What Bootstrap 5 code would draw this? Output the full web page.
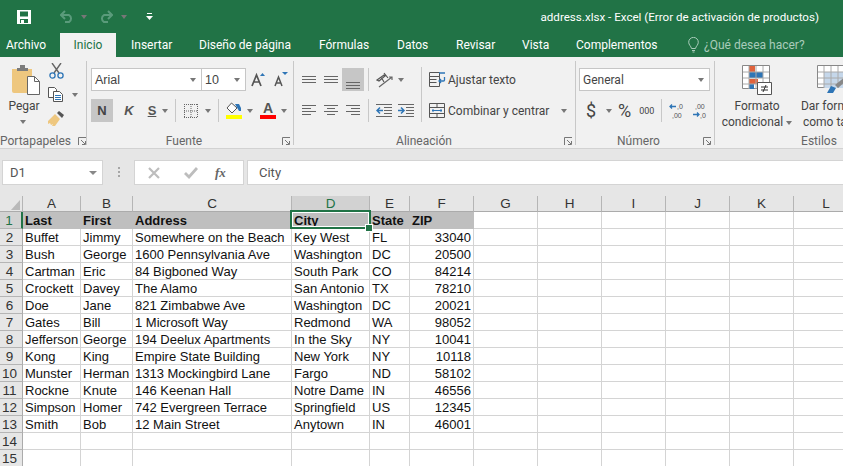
<!doctype html>
<html lang="es">
<head>
<meta charset="utf-8">
<title>address.xlsx - Excel</title>
<link href="https://cdn.jsdelivr.net/npm/bootstrap@5.3.0/dist/css/bootstrap.min.css" rel="stylesheet">
<style>
html,body{width:843px;height:466px;overflow:hidden;background:#e6e6e6}
body{font-family:Roboto,"Noto Sans",sans-serif;font-size:12px;color:#444;line-height:16px}
svg{display:block;flex:none}
.l1{margin-left:1px}.l2{margin-left:2px}.l3{margin-left:3px}.l4{margin-left:4px}.l5{margin-left:5px}.l6{margin-left:6px}.l7{margin-left:7px}.l8{margin-left:8px}.l9{margin-left:9px}.l10{margin-left:10px}.l11{margin-left:11px}.l12{margin-left:12px}.l14{margin-left:14px}.l19{margin-left:19px}.l23{margin-left:23px}.l29{margin-left:29px}
.dim{border-top-color:#5a9b7b}
.titlebar{height:33px;background:#217346;color:#fff;padding-left:17px}
.doc-title{margin-left:auto;margin-right:24px;font-size:11.6px}
.tabrow{height:24px;background:#217346;color:#fff;display:grid;grid-template-columns:54px 56px 83px 120px 78px 59px 66px 54px 112px 16px 1fr;padding-left:6px;align-items:center}
.tabrow>div{white-space:nowrap}
.tab-on{background:#f1f1f1;color:#217346;height:24px;line-height:25px;text-align:center}
.tab-ins{padding-left:15px}
.tell{color:#a9ccba}
.ribbon{height:92px;background:#f1f1f1;border-bottom:1px solid #d2d2d2;padding-top:4px;overflow:hidden;display:flex}
.rgroup{height:84px;border-right:1px solid #c8c8c8;display:flex;flex-direction:column;flex:none}
.g1{width:87px}.g2{width:207px;padding-left:4px}.g3{width:282px}.g4{width:139px;padding-left:3px}.g5{width:208px;border:0}
.rbody{flex:1;min-height:0}
.rowa{margin-top:7px;height:23px;display:flex;align-items:center}
.rowb{margin-top:8px;height:23px;display:flex;align-items:center}
.rlabel{height:16px;margin-bottom:-4px;display:flex;align-items:center;color:#666}
.rlabel span{flex:1;text-align:center}
.lab-a span{padding-right:7px}
.lab-c span{padding-right:10px}
.lab-d span{padding-right:5px}
.launch{margin-right:3px}
.tri{width:0;height:0;border-left:3.5px solid transparent;border-right:3.5px solid transparent;border-top:4px solid #777;flex:none}
.vsep{width:1px;height:23px;background:#c8c8c8;flex:none}
.vsep-tall{height:55px;margin-top:6px}
.combo{height:23px;background:#fff;border:1px solid #c6c6c6;display:flex;align-items:center;padding:0 5px 0 3px;flex:none;color:#444}
.c-font{width:111px}.c-size{width:44px;border-left:0}.c-num{width:131px}
.combo .tri{margin-left:auto}
.cfont{font-family:"Liberation Sans",sans-serif;font-size:12.5px}
.hot{background:#c6c6c6;height:23px;display:flex;align-items:center;justify-content:center;flex:none}
.hot-b{width:22px;padding-top:12px}
.btnb{width:22px;font:bold 13px "Liberation Sans",sans-serif;color:#444}
.ltr{font:bold 13px "Liberation Sans",sans-serif;color:#555;width:12px;text-align:center}
.ltr-i{font-style:italic}
.ltr-u{text-decoration:underline}
.swatch{width:16px}
.fillbar-y{height:4px;background:#ff0;margin-top:1px}
.fillbar-r{height:4px;background:#f00;margin-top:1px}
.bigA{font:bold 14px/12px "Liberation Sans",sans-serif;color:#555;text-align:center}
.cmdtext{white-space:nowrap}
.bigcol{flex:none;width:76px;text-align:center;white-space:nowrap}
.bigcol svg{margin:4px auto 0}
.bigcol svg.ic2{margin-left:22px}
.bigcol p{margin:3px 0 0;line-height:16px}
.bigcol p+p{margin-top:0}
.ptcol{width:48px}
.pt-ic{margin:4px 0 0 12px}
.pt-tx{margin-top:3px;text-align:center}
.pt-tri{margin:6px 0 0 20px}
.mt2x{margin-top:2px}.mt8x{margin-top:8px}
.al-left{width:127px}
.l-big{font-size:18px}
.dollar{width:9px}
.k000{font-size:9px}
.pad5{padding-left:4px}
.dec{font:7px "Liberation Sans",sans-serif;fill:#555}
.fbar{height:47px;padding:11px 0 0 2px;display:flex;background:#e6e6e6}
.fbox{height:25px;background:#fff;border:1px solid #d4d4d4;display:flex;align-items:center;flex:none;font-size:13px}
.namebox{width:101px;padding:0 5px 0 7px;color:#555}
.namebox .tri{margin-left:auto;border-left-width:4px;border-right-width:4px;border-top-color:#888}
.fxbox{width:110px;margin-left:14px;padding-left:12px}
.fxtxt{font:italic bold 13px "Liberation Serif",serif;color:#666;margin-left:17px}
.finput{margin-left:3px;flex:1;padding-left:11px;color:#555;border-right:0}
.grip{width:2px;margin-left:15px;margin-top:7px;height:11px;background:repeating-linear-gradient(#a6a6a6 0 2px,transparent 2px 4px)}
.sheetwrap{height:270px;overflow:hidden;background:#fff}
.sheet{table-layout:fixed;width:859px;border-collapse:separate;border-spacing:0;font-family:"Liberation Sans",sans-serif;font-size:13px;color:#111}
.w23{width:23px}.w58{width:58px}.w52{width:52px}.w159{width:159px}.w78{width:78px}.w40{width:40px}.w64{width:64px}.w65{width:65px}
.sheet th,.sheet td{height:17px;padding:2px 2px 0;line-height:14px;border-right:1px solid #d4d4d4;border-bottom:1px solid #d4d4d4;white-space:nowrap;overflow:hidden;font-weight:400}
.sheet thead th{height:16px;font-size:13.5px;background:#e6e6e6;border-right:1px solid #b5b5b5;border-bottom:1px solid #ababab;text-align:center;color:#333;padding:0}
.sheet thead th.col-on{background:#d2d2d2;color:#217346;border-bottom:1px solid #217346}
.sheet tbody th{font-size:13.5px;background:#e6e6e6;border-right:1px solid #ababab;border-bottom:1px solid #b5b5b5;text-align:center;color:#333;padding:2px 3px 0 0}
.sheet tbody th.row-on{background:#d2d2d2;color:#217346;border-right:2px solid #217346}
.hdrcell{background:#bfbfbf;font-weight:700!important;border-color:#bfbfbf!important;color:#111}
.sheet td.num{text-align:right}
.corner svg{margin:2px 0 0 11px}
.sheet td.cellsel{position:relative;overflow:visible}
.cellsel::after{content:"";position:absolute;inset:-2px -2px -1px -2px;border:2px solid #217346;box-shadow:inset 0 0 0 1px #fff;pointer-events:none}
.cellsel::before{content:"";position:absolute;right:-4px;bottom:-4px;width:6px;height:6px;background:#217346;border:1px solid #fff;box-sizing:content-box;z-index:2}
</style>
</head>
<body>
<div class="titlebar d-flex align-items-center">
  <svg width="14" height="14" viewBox="0 0 14 14"><path fill="#fff" fill-rule="evenodd" d="M0 0h14v14H0zM3 1.500v5h8v-5zM3 9v4h8V9z"/><rect x="4" y="10" width="3" height="3" fill="#fff"/></svg>
  <svg class="l29" width="14" height="13" viewBox="0 0 14 13" fill="none" stroke="#5a9b7b" stroke-width="2"><path d="M1 5h8a4 4 0 0 1 0 7H5M5 1 1 5l4 4"/></svg>
  <div class="tri l7 dim"></div>
  <svg class="l12" width="14" height="13" viewBox="0 0 14 13" fill="none" stroke="#5a9b7b" stroke-width="2"><path d="M13 5H5a4 4 0 0 0 0 7h4M9 1l4 4-4 4"/></svg>
  <div class="tri l8 dim"></div>
  <svg class="l19" width="7" height="7" viewBox="0 0 7 7" fill="#fff"><path d="M1 0h5v1H1zM0 3h7L3.500 7z"/></svg>
  <div class="doc-title">address.xlsx - Excel (Error de activación de productos)</div>
</div>
<div class="tabrow">
  <div>Archivo</div><div class="tab-on">Inicio</div><div class="tab-ins">Insertar</div><div>Diseño de página</div><div>Fórmulas</div><div>Datos</div><div>Revisar</div><div>Vista</div><div>Complementos</div>
  <svg width="11" height="16" viewBox="0 0 11 16" fill="none" stroke="#a9ccba"><path d="M3.500 11.500C3 9 .7 8 .7 5.200a4.800 4.800 0 0 1 9.600 0C10.300 8 8 9 7.500 11.500zM4 13.500h3M4.500 15h2"/></svg>
  <div class="tell">¿Qué desea hacer?</div>
</div>
<div class="ribbon">
  <div class="rgroup g1">
    <div class="rbody d-flex">
      <div class="ptcol">
        <svg class="pt-ic" width="28" height="30" viewBox="0 0 28 30"><path fill="#eec77f" d="M0 4h20v24H2a2 2 0 0 1-2-2z"/><path fill="#7c7c7c" d="M5 3h3V0h5v3h3v3H5z"/><path fill="#fff" stroke="#666" d="M15.500 11.500h7l5 5v13h-12z"/><path fill="none" stroke="#666" d="M22.500 11.500v5h5"/></svg>
        <div class="pt-tx">Pegar</div>
        <div class="tri pt-tri"></div>
      </div>
      <div>
        <svg class="l1 mt2x" width="15" height="16" viewBox="0 0 15 16" fill="none"><path stroke="#666" stroke-width="1.400" d="M3 0l7 10M12 0 5 10"/><circle cx="3.500" cy="12.500" r="2.600" stroke="#2e75b6" stroke-width="1.300"/><circle cx="11.500" cy="12.500" r="2.600" stroke="#2e75b6" stroke-width="1.300"/></svg>
        <div class="d-flex align-items-center mt8x">
          <svg width="16" height="15" viewBox="0 0 16 15" fill="#fff" stroke="#555"><path d="M.5.500h6l2 2v8h-8z"/><path d="M5.500 4.500h6l3 3v7h-9z"/><path stroke="#2e75b6" d="M7 8.500h6M7 10.500h6M7 12.500h6"/></svg>
          <div class="tri l8"></div>
        </div>
        <svg class="mt8x" width="17" height="16" viewBox="0 0 17 16"><path fill="#eec77f" d="M0 11l7-7 5 5-5 7H4l1-2-2 1-1-2-2 1z"/><path fill="#555" d="M9 3l2-2 5 4-2 3z"/></svg>
      </div>
    </div>
    <div class="rlabel lab-a"><span>Portapapeles</span><svg class="launch" width="8" height="8" viewBox="0 0 8 8" fill="none" stroke="#777"><path d="M.5 8V.5H8M3 3l4 4M4 7.500h3.500V4"/></svg></div>
  </div>
  <div class="rgroup g2">
    <div class="rbody">
      <div class="rowa">
        <div class="combo c-font"><span class="cfont">Arial</span><div class="tri"></div></div>
        <div class="combo c-size"><span class="cfont">10</span><div class="tri"></div></div>
        <svg class="l5" width="14" height="15" viewBox="0 0 14 15"><path fill="none" stroke="#555" stroke-width="1.700" d="M1 14 5.500 3 10 14M3 10h5"/><path fill="#2e75b6" d="M9 4l2.500-3L14 4z"/></svg>
        <svg class="l9" width="14" height="15" viewBox="0 0 14 15"><path fill="none" stroke="#555" stroke-width="1.500" d="M1 14l3.500-9L8 14M2.500 11h4"/><path fill="#2e75b6" d="M8 0h6l-3 3z"/></svg>
      </div>
      <div class="rowb">
        <div class="hot btnb">N</div>
        <div class="ltr ltr-i l10">K</div>
        <div class="ltr ltr-u l11">S</div>
        <div class="tri l4"></div>
        <div class="vsep l7"></div>
        <svg class="l8" width="14" height="14" viewBox="0 0 14 14" fill="none" stroke="#666" stroke-dasharray="1 1"><path d="M.5 0v14M7 0v14M13.500 0v14M0 .5h14M0 7h14M0 13.500h14"/></svg>
        <div class="tri l7"></div>
        <div class="vsep l7"></div>
        <div class="swatch l7">
          <svg width="16" height="12" viewBox="0 0 16 12"><path fill="#fff" stroke="#555" d="M5.500 1 1 6l5 5 5-5z"/><path fill="#2e75b6" d="M9 2h4l2 4v3h-2z"/></svg>
          <div class="fillbar-y"></div>
        </div>
        <div class="tri l5"></div>
        <div class="swatch l7">
          <div class="bigA">A</div>
          <div class="fillbar-r"></div>
        </div>
        <div class="tri l5"></div>
      </div>
    </div>
    <div class="rlabel lab-d"><span>Fuente</span><svg class="launch" width="8" height="8" viewBox="0 0 8 8" fill="none" stroke="#777"><path d="M.5 8V.5H8M3 3l4 4M4 7.500h3.500V4"/></svg></div>
  </div>
  <div class="rgroup g3">
    <div class="rbody d-flex">
      <div class="al-left">
        <div class="rowa">
          <svg class="l8" width="14" height="8" viewBox="0 0 14 8" stroke="#666"><path d="M0 .5h14M0 3.500h14M0 6.500h14"/></svg>
          <svg class="l8" width="14" height="8" viewBox="0 0 14 8" stroke="#666"><path d="M0 .5h14M0 3.500h14M0 6.500h14"/></svg>
          <div class="hot hot-b l4"><svg width="14" height="8" viewBox="0 0 14 8" stroke="#666"><path d="M0 .5h14M0 3.500h14M0 6.500h14"/></svg></div>
          <div class="vsep l4"></div>
          <svg class="l7" width="17" height="16" viewBox="0 0 17 16" fill="none" stroke="#555" stroke-width="1.200"><path d="M1 8l7-5 1 1-6 5zM5 5l3 5M8 1l4 5"/><path stroke="#666" d="M3 15 16 5M13 5h3v3"/></svg>
          <div class="tri l5"></div>
        </div>
        <div class="rowb">
          <svg class="l8" width="14" height="11" viewBox="0 0 14 11" stroke="#666"><path d="M0 .5h14M0 3.500h9M0 6.500h14M0 9.500h9"/></svg>
          <svg class="l8" width="14" height="11" viewBox="0 0 14 11" stroke="#666"><path d="M0 .5h14M3 3.500h8M0 6.500h14M3 9.500h8"/></svg>
          <svg class="l8" width="14" height="11" viewBox="0 0 14 11" stroke="#666"><path d="M0 .5h14M5 3.500h9M0 6.500h14M5 9.500h9"/></svg>
          <div class="vsep l8"></div>
          <svg class="l7" width="16" height="13" viewBox="0 0 16 13" fill="none" stroke="#666"><path d="M0 .5h16M8 3.500h8M8 6.500h8M8 9.500h8M0 12.500h16"/><path stroke="#2e75b6" stroke-width="1.500" d="M7 6.500H1M4 3.500l-3 3 3 3"/></svg>
          <svg class="l6" width="16" height="13" viewBox="0 0 16 13" fill="none" stroke="#666"><path d="M0 .5h16M8 3.500h8M8 6.500h8M8 9.500h8M0 12.500h16"/><path stroke="#2e75b6" stroke-width="1.500" d="M0 6.500h6M3 3.500l3 3-3 3"/></svg>
        </div>
      </div>
      <div class="vsep vsep-tall"></div>
      <div>
        <div class="rowa">
          <svg class="l7" width="17" height="15" viewBox="0 0 17 15" fill="none" stroke="#555"><path d="M.5.500h10v4H.5zM.5 4.500h10v10H.5zM.5 7.500h7M.5 10.500h7"/><path stroke="#2e75b6" stroke-width="1.300" d="M10 1h6M15.500 5v3a1 1 0 0 1-1 1H10M12 7l-2 2 2 2"/></svg>
          <span class="cmdtext l2">Ajustar texto</span>
        </div>
        <div class="rowb">
          <svg class="l7" width="16" height="15" viewBox="0 0 16 15" fill="none" stroke="#555"><path d="M.5.500h15v14H.5zM.5 4.500h15M.5 10.500h15M8 .5v4M8 10.500v4"/><path stroke="#2e75b6" d="M3 7.500h10M4 6v3M12 6v3"/></svg>
          <span class="cmdtext l3">Combinar y centrar</span>
          <div class="tri l12"></div>
        </div>
      </div>
    </div>
    <div class="rlabel lab-c"><span>Alineación</span><svg class="launch" width="8" height="8" viewBox="0 0 8 8" fill="none" stroke="#777"><path d="M.5 8V.5H8M3 3l4 4M4 7.500h3.500V4"/></svg></div>
  </div>
  <div class="rgroup g4">
    <div class="rbody">
      <div class="rowa"><div class="combo c-num">General<div class="tri"></div></div></div>
      <div class="rowb">
        <span class="l-big dollar l7">$</span>
        <div class="tri l11"></div>
        <span class="l-big l6">%</span>
        <span class="k000 l8">000</span>
        <div class="vsep l7"></div>
        <svg class="l7" width="16" height="17" viewBox="0 0 16 17" fill="none"><path stroke="#2e75b6" stroke-width="1.300" d="M7 4.500H1M3 2.500 1 4.500l2 2"/><text class="dec" x="8" y="7">,0</text><text class="dec" x="3" y="15.500">,00</text></svg>
        <svg class="l7" width="16" height="17" viewBox="0 0 16 17" fill="none"><text class="dec" x="3" y="7">,00</text><path stroke="#2e75b6" stroke-width="1.300" d="M1 12.500h6M5 10.500l2 2-2 2"/><text class="dec" x="8" y="15.500">,0</text></svg>
      </div>
    </div>
    <div class="rlabel lab-d"><span>Número</span><svg class="launch" width="8" height="8" viewBox="0 0 8 8" fill="none" stroke="#777"><path d="M.5 8V.5H8M3 3l4 4M4 7.500h3.500V4"/></svg></div>
  </div>
  <div class="rgroup g5">
    <div class="rbody d-flex pad5">
      <div class="bigcol">
        <svg width="30" height="30" viewBox="0 0 30 30"><path fill="#fff" stroke="#888" d="M.5.500h27v23H.5z"/><path fill="#e0633c" d="M7 1h6v6H7zM7 14h9v5H7z"/><path fill="#2e75b6" d="M7 7h14v6H7zM7 19h5v5H7z"/><path stroke="#aaa" d="M7 1v23M14 1v23M21 1v23M1 7h26M1 13h26M1 19h26"/><path fill="#fff" stroke="#555" d="M15.500 17.500h14v12h-14z"/><path stroke="#333" d="M19 22h7M19 25h7M24 20l-3 7"/></svg>
        <p>Formato</p>
        <p>condicional <span class="tri d-inline-block align-middle"></span></p>
      </div>
      <div class="bigcol">
        <svg class="ic2" width="30" height="30" viewBox="0 0 30 30"><path fill="#fff" stroke="#888" d="M.5.500h26v22H.5z"/><path fill="#c5d7ea" d="M7 7h20v16H7z"/><path stroke="#aaa" d="M7 1v22M14 1v22M21 1v22M1 7h26M1 13h26M1 19h26"/><path fill="#2e75b6" d="M10 28l4-7 5 2-3 5z"/><path fill="#888" d="M18 20l10-8 2 3-9 8z"/></svg>
        <p>Dar formato</p>
        <p>como tabla</p>
      </div>
    </div>
    <div class="rlabel"><span>Estilos</span></div>
  </div>
</div>
<div class="fbar">
  <div class="fbox namebox">D1<div class="tri"></div></div>
  <div class="grip"></div>
  <div class="fbox fxbox">
    <svg width="14" height="13" viewBox="0 0 14 13" stroke="#bdbdbd" stroke-width="2.200"><path d="M2 2l10 10M12 2 2 12"/></svg>
    <svg class="l23" width="14" height="12" viewBox="0 0 14 12" fill="none" stroke="#bdbdbd" stroke-width="2.800"><path d="M1 6l4 4 8-9"/></svg>
    <span class="fxtxt">fx</span>
  </div>
  <div class="fbox finput">City</div>
</div>
<div class="sheetwrap">
<table class="sheet">
<colgroup><col class="w23"><col class="w58"><col class="w52"><col class="w159"><col class="w78"><col class="w40"><col class="w64"><col class="w64"><col class="w64"><col class="w64"><col class="w64"><col class="w64"><col class="w65"></colgroup>
<thead><tr><th class="corner"><svg width="9" height="10" viewBox="0 0 9 10"><path fill="#b9b9b9" d="M9 0v10H0z"/></svg></th><th>A</th><th>B</th><th>C</th><th class="col-on">D</th><th>E</th><th>F</th><th>G</th><th>H</th><th>I</th><th>J</th><th>K</th><th>L</th></tr></thead>
<tbody>
<tr><th class="row-on">1</th><td class="hdrcell">Last</td><td class="hdrcell">First</td><td class="hdrcell">Address</td><td class="hdrcell cellsel">City</td><td class="hdrcell">State</td><td class="hdrcell">ZIP</td><td></td><td></td><td></td><td></td><td></td><td></td></tr>
<tr><th>2</th><td>Buffet</td><td>Jimmy</td><td>Somewhere on the Beach</td><td>Key West</td><td>FL</td><td class="num">33040</td><td></td><td></td><td></td><td></td><td></td><td></td></tr>
<tr><th>3</th><td>Bush</td><td>George</td><td>1600 Pennsylvania Ave</td><td>Washington</td><td>DC</td><td class="num">20500</td><td></td><td></td><td></td><td></td><td></td><td></td></tr>
<tr><th>4</th><td>Cartman</td><td>Eric</td><td>84 Bigboned Way</td><td>South Park</td><td>CO</td><td class="num">84214</td><td></td><td></td><td></td><td></td><td></td><td></td></tr>
<tr><th>5</th><td>Crockett</td><td>Davey</td><td>The Alamo</td><td>San Antonio</td><td>TX</td><td class="num">78210</td><td></td><td></td><td></td><td></td><td></td><td></td></tr>
<tr><th>6</th><td>Doe</td><td>Jane</td><td>821 Zimbabwe Ave</td><td>Washington</td><td>DC</td><td class="num">20021</td><td></td><td></td><td></td><td></td><td></td><td></td></tr>
<tr><th>7</th><td>Gates</td><td>Bill</td><td>1 Microsoft Way</td><td>Redmond</td><td>WA</td><td class="num">98052</td><td></td><td></td><td></td><td></td><td></td><td></td></tr>
<tr><th>8</th><td>Jefferson</td><td>George</td><td>194 Deelux Apartments</td><td>In the Sky</td><td>NY</td><td class="num">10041</td><td></td><td></td><td></td><td></td><td></td><td></td></tr>
<tr><th>9</th><td>Kong</td><td>King</td><td>Empire State Building</td><td>New York</td><td>NY</td><td class="num">10118</td><td></td><td></td><td></td><td></td><td></td><td></td></tr>
<tr><th>10</th><td>Munster</td><td>Herman</td><td>1313 Mockingbird Lane</td><td>Fargo</td><td>ND</td><td class="num">58102</td><td></td><td></td><td></td><td></td><td></td><td></td></tr>
<tr><th>11</th><td>Rockne</td><td>Knute</td><td>146 Keenan Hall</td><td>Notre Dame</td><td>IN</td><td class="num">46556</td><td></td><td></td><td></td><td></td><td></td><td></td></tr>
<tr><th>12</th><td>Simpson</td><td>Homer</td><td>742 Evergreen Terrace</td><td>Springfield</td><td>US</td><td class="num">12345</td><td></td><td></td><td></td><td></td><td></td><td></td></tr>
<tr><th>13</th><td>Smith</td><td>Bob</td><td>12 Main Street</td><td>Anytown</td><td>IN</td><td class="num">46001</td><td></td><td></td><td></td><td></td><td></td><td></td></tr>
<tr><th>14</th><td></td><td></td><td></td><td></td><td></td><td></td><td></td><td></td><td></td><td></td><td></td><td></td></tr>
<tr><th>15</th><td></td><td></td><td></td><td></td><td></td><td></td><td></td><td></td><td></td><td></td><td></td><td></td></tr>
</tbody>
</table>
</div>
</body>
</html>
